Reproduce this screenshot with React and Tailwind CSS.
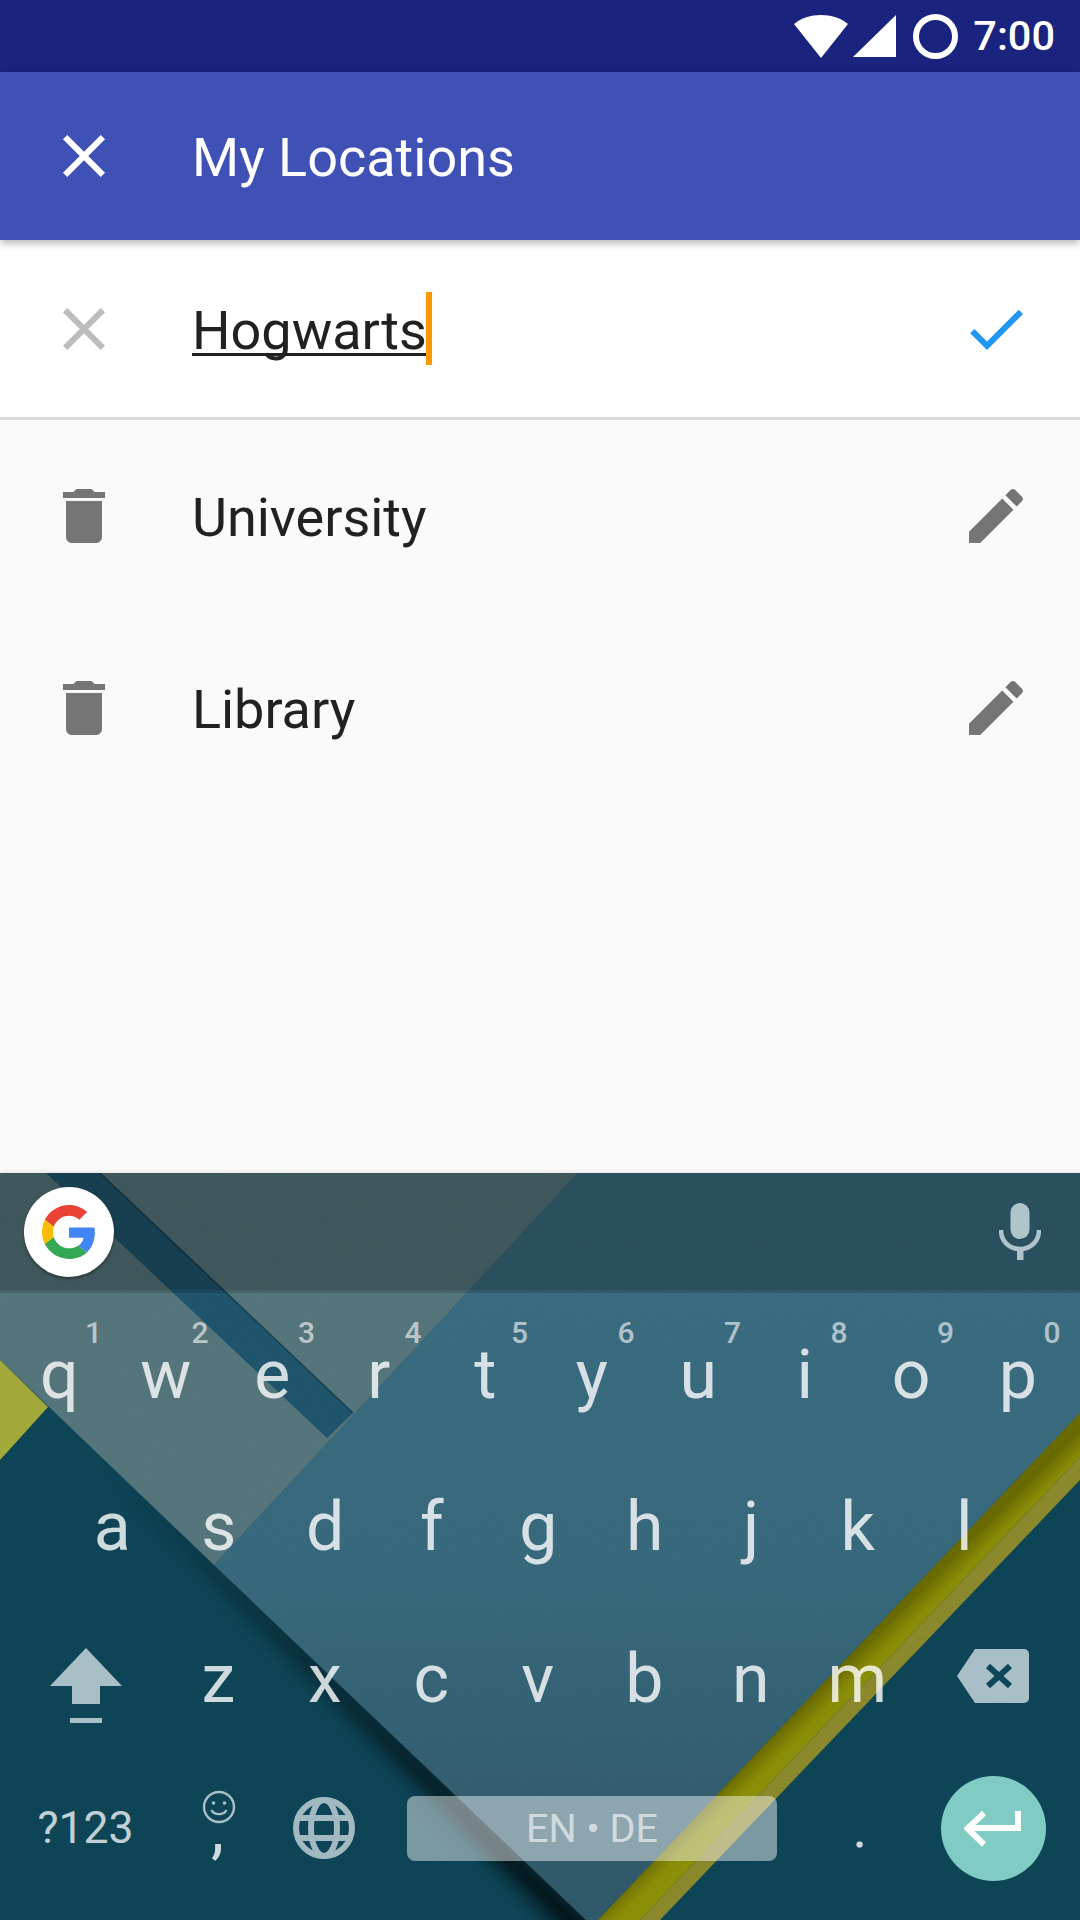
const font = { fontFamily: "Roboto, sans-serif" };

function MdIcon({ d, className }) {
  return (
    <svg viewBox="0 0 24 24" className={className} fill="currentColor">
      <path d={d} />
    </svg>
  );
}

const CLOSE = "M19 6.41L17.59 5 12 10.59 6.41 5 5 6.41 10.59 12 5 17.59 6.41 19 12 13.41 17.59 19 19 17.59 13.41 12z";
const CHECK = "M9 16.17L4.83 12l-1.42 1.41L9 19 21 7l-1.41-1.41z";
const TRASH = "M6 19c0 1.1.9 2 2 2h8c1.1 0 2-.9 2-2V7H6v12zM19 4h-3.5l-1-1h-5l-1 1H5v2h14V4z";
const EDIT = "M3 17.25V21h3.75L17.81 9.94l-3.75-3.75L3 17.25zM20.71 7.04c.39-.39.39-1.02 0-1.41l-2.34-2.34c-.39-.39-1.02-.39-1.41 0l-1.83 1.83 3.75 3.75 1.83-1.83z";

function Wallpaper() {
  return (
    <svg viewBox="0 1173 1080 747" className="absolute inset-0 w-[1080px] h-[747px]">
      <defs>
        <linearGradient id="blue" x1="0" y1="0" x2="0" y2="1">
          <stop offset="0" stopColor="#3b6d82" />
          <stop offset="0.55" stopColor="#38697c" />
          <stop offset="1" stopColor="#30596a" />
        </linearGradient>
        <linearGradient id="olive" gradientUnits="userSpaceOnUse" x1="800" y1="1710" x2="820" y2="1730">
          <stop offset="0" stopColor="#6a6b02" />
          <stop offset="0.6" stopColor="#8a8d08" />
          <stop offset="1" stopColor="#8d9108" />
        </linearGradient>
        <filter id="soft" x="-20%" y="-20%" width="140%" height="140%">
          <feGaussianBlur stdDeviation="11" />
        </filter>
        <filter id="paper" x="0" y="0" width="100%" height="100%">
          <feTurbulence type="fractalNoise" baseFrequency="0.8" numOctaves="2" seed="4" />
          <feColorMatrix type="matrix" values="0 0 0 0 0  0 0 0 0 0  0 0 0 0 0  0 0 0 0.7 -0.28" />
        </filter>
      </defs>
      <rect x="0" y="1173" width="1080" height="747" fill="#0e4658" />
      <polygon points="100,1459 610,1940 575,1940 300,1660" fill="#000" fillOpacity="0.9" filter="url(#soft)" />
      <polygon points="578,1173 1080,1173 1080,1413 598,1920 586,1920 214,1565" fill="url(#blue)" />
      <polygon points="1080,1413 1080,1457 640,1920 598,1920" fill="url(#olive)" />
      <polygon points="1080,1457 1080,1480 660,1920 640,1920" fill="#8c8a2d" />
      <polygon points="0,1173 578,1173 214,1565 0,1360" fill="#55767c" />
      <polygon points="46,1173 100,1173 353,1413 327,1438" fill="#20566d" />
      <line x1="100" y1="1173" x2="353" y2="1413" stroke="#0a3040" strokeWidth="1.5" strokeOpacity="0.7" />
      <polygon points="0,1360 48,1407 0,1460" fill="#a4ab3a" />
      <rect x="0" y="1173" width="1080" height="747" filter="url(#paper)" opacity="0.12" />
    </svg>
  );
}

function GoogleG() {
  return (
    <svg viewBox="0 0 48 48" className="w-[54px] h-[54px]">
      <path fill="#EA4335" d="M24 9.5c3.54 0 6.71 1.22 9.21 3.6l6.85-6.85C35.9 2.38 30.47 0 24 0 14.62 0 6.51 5.38 2.56 13.22l7.98 6.19C12.43 13.72 17.74 9.5 24 9.5z" />
      <path fill="#4285F4" d="M46.98 24.55c0-1.57-.15-3.09-.38-4.55H24v9.02h12.94c-.58 2.96-2.26 5.48-4.78 7.18l7.73 6c4.51-4.18 7.09-10.36 7.09-17.65z" />
      <path fill="#FBBC05" d="M10.53 28.59c-.48-1.45-.76-2.99-.76-4.59s.27-3.14.76-4.59l-7.98-6.19C.92 16.46 0 20.12 0 24c0 3.88.92 7.54 2.56 10.78l7.97-6.19z" />
      <path fill="#34A853" d="M24 48c6.48 0 11.93-2.13 15.89-5.81l-7.73-6c-2.15 1.45-4.92 2.3-8.16 2.3-6.26 0-11.57-4.22-13.47-9.91l-7.98 6.19C6.51 42.62 14.62 48 24 48z" />
    </svg>
  );
}

function Key({ label, hint }) {
  return (
    <div className="relative w-[106.5px] h-full flex items-center justify-center pt-[12px] text-[68px] leading-none text-white/80">
      {label}
      {hint && (
        <span className="absolute right-[6px] top-[25px] w-[26px] text-center text-[30px] leading-none font-medium text-white/60">
          {hint}
        </span>
      )}
    </div>
  );
}

function ListRow({ name }) {
  return (
    <div className="flex items-center h-[192px] px-[48px]">
      <MdIcon d={TRASH} className="w-[72px] h-[72px] text-[#757575]" />
      <span className="ml-[72px] flex-1 pt-[3px] text-[54px] tracking-[-0.05px] text-[#212121]">{name}</span>
      <MdIcon d={EDIT} className="w-[72px] h-[72px] text-[#757575]" />
    </div>
  );
}

export default function App() {
  return (
    <div className="flex flex-col w-[1080px] h-[1920px] overflow-hidden bg-[#fafafa]" style={font}>
      <div className="h-[72px] bg-[#1a237e] flex items-center justify-end pr-[25px] text-white">
        <svg viewBox="0 0 54 43" className="w-[54px] h-[43px] mr-[5px]" fill="#fff">
          <path d="M27 43 L0 9 C7 3 17 0 27 0 C37 0 47 3 54 9 Z" />
        </svg>
        <svg viewBox="0 0 43 42" className="w-[43px] h-[42px] mr-[17px]" fill="#fff">
          <path d="M43 0 V42 H0 Z" />
        </svg>
        <div className="w-[45px] h-[45px] rounded-full border-[6px] border-white mr-[15px]" />
        <span className="text-[41.5px] leading-none font-medium">7:00</span>
      </div>

      <div className="relative z-10 h-[168px] bg-[#3f51b5] flex items-center px-[48px] shadow-[0_3px_8px_rgba(0,0,0,0.3)] text-white">
        <MdIcon d={CLOSE} className="w-[72px] h-[72px]" />
        <span className="ml-[72px] pt-[3px] text-[54px]">My Locations</span>
      </div>

      <div className="h-[180px] bg-white border-b-[3px] border-[#d9d9d9] flex items-center px-[48px]">
        <MdIcon d={CLOSE} className="w-[72px] h-[72px] text-[#bdbdbd]" />
        <div className="ml-[72px] flex-1 flex items-center text-[54px] text-[#212121]">
          <span className="pt-[3px] underline decoration-[3px] underline-offset-[4px] [text-decoration-skip-ink:none]">Hogwarts</span>
          <span className="-ml-[1px] w-[6px] h-[73px] bg-[#ff9800]" />
        </div>
        <MdIcon d={CHECK} className="w-[72px] h-[72px] text-[#2196f3]" />
      </div>

      <ListRow name="University" />
      <ListRow name="Library" />
      <div className="flex-1" />

      <div className="relative h-[747px] shrink-0 shadow-[0_-1px_4px_rgba(0,0,0,0.1)]">
        <Wallpaper />
        <div className="relative flex flex-col h-full">
          <div className="h-[117px] bg-black/25 flex items-center justify-between pl-[24px] pr-[39px]">
            <div className="w-[90px] h-[90px] rounded-full bg-white flex items-center justify-center shadow-[0_2px_3px_rgba(0,0,0,0.35)]">
              <GoogleG />
            </div>
            <svg viewBox="0 0 42 57" className="w-[42px] h-[57px]">
              <rect x="11.5" y="0" width="19" height="36" rx="9.5" fill="#b0c4cb" />
              <path d="M2 27 C2 39 11 46 21 46 C31 46 40 39 40 27" fill="none" stroke="#b0c4cb" strokeWidth="4.5" />
              <rect x="18" y="44" width="6.5" height="13" fill="#b0c4cb" />
            </svg>
          </div>
          <div className="h-[3px] bg-black/15" />

          <div className="flex h-[152px] pl-[6px]">
            {["q", "w", "e", "r", "t", "y", "u", "i", "o", "p"].map((k, i) => (
              <Key key={k} label={k} hint={String((i + 1) % 10)} />
            ))}
          </div>

          <div className="flex h-[152px] pl-[59px]">
            {["a", "s", "d", "f", "g", "h", "j", "k", "l"].map((k) => (
              <Key key={k} label={k} />
            ))}
          </div>

          <div className="flex h-[152px]">
            <div className="w-[165px] flex justify-center items-start pt-[51px] pl-[7px]">
              <svg viewBox="0 0 72 75" className="w-[72px] h-[75px]" fill="#a9bfc7">
                <path d="M36 0 L72 38 H50 V56 H22 V38 H0 Z" />
                <rect x="20" y="70" width="32" height="5" />
              </svg>
            </div>
            {["z", "x", "c", "v", "b", "n", "m"].map((k) => (
              <Key key={k} label={k} />
            ))}
            <div className="flex-1 flex justify-start items-start pt-[52px] pl-[46.5px]">
              <svg viewBox="0 0 72 54" className="w-[72px] h-[54px]">
                <path d="M18 0 H67 A5 5 0 0 1 72 5 V49 A5 5 0 0 1 67 54 H18 L0 27 Z" fill="#a9bfc7" />
                <path d="M31 17 L53 37 M53 17 L31 37" stroke="#0e4759" strokeWidth="6" />
              </svg>
            </div>
          </div>

          <div className="flex h-[158px] items-center">
            <div className="w-[162px] pl-[9px] text-center text-[44.5px] leading-none text-white/75">?123</div>
            <div className="relative w-[108px] h-full">
              <svg viewBox="0 0 34 34" className="absolute left-[40px] top-[41px] w-[34px] h-[34px]" fill="none" stroke="#a9bfc7" strokeWidth="2.4">
                <circle cx="17" cy="17" r="15" />
                <circle cx="11.5" cy="13" r="1.8" fill="#a9bfc7" stroke="none" />
                <circle cx="22.5" cy="13" r="1.8" fill="#a9bfc7" stroke="none" />
                <path d="M9.5 20 C12 25.5 22 25.5 24.5 20" />
              </svg>
              <span className="absolute left-[49px] top-[47px] text-[66px] leading-none text-white/80">,</span>
            </div>
            <div className="w-[108px] flex justify-center">
              <svg viewBox="0 0 62 62" className="w-[62px] h-[62px]" fill="none" stroke="#a3b9c1" strokeWidth="6">
                <circle cx="31" cy="31" r="28" />
                <ellipse cx="31" cy="31" rx="13" ry="28" />
                <path d="M6 21 H56 M6 41 H56" />
              </svg>
            </div>
            <div className="w-[426px] pl-[2px] flex justify-center">
              <div className="w-[370px] h-[65px] rounded-[8px] bg-white/45 flex items-center justify-center pt-[1px] text-[39.5px] leading-none text-white/60">
                EN • DE
              </div>
            </div>
            <div className="w-[108px] pl-[4px] text-center text-[56px] leading-none text-white/80">.</div>
            <div className="w-[168px] pr-[6px] flex justify-center">
              <div className="w-[105px] h-[105px] rounded-full bg-[#80cbc4] flex items-center justify-center">
                <svg viewBox="0 0 58 36" className="w-[58px] h-[36px] mt-[2px]" fill="none" stroke="#fff" strokeWidth="6">
                  <path d="M54 0 V17 H4" />
                  <path d="M20 2 L3.5 17.5 L20 33.5" />
                </svg>
              </div>
            </div>
          </div>
        </div>
      </div>
    </div>
  );
}
